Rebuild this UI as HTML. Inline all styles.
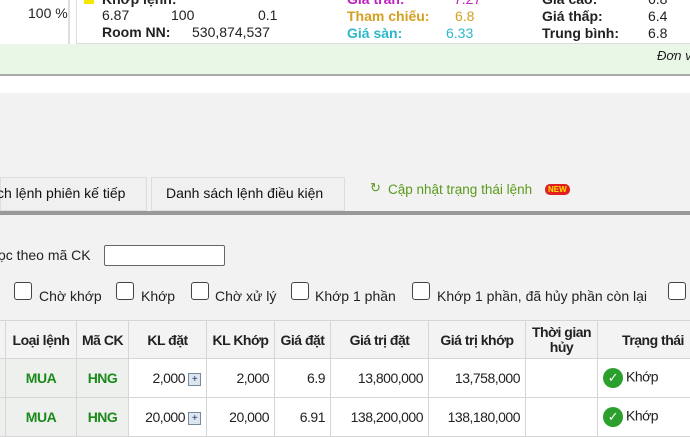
<!DOCTYPE html><html><head><meta charset="utf-8"><style>
body{margin:0;width:690px;height:435px;overflow:hidden;background:#f2f2f2;font-family:"Liberation Sans",sans-serif;position:relative;font-size:14px;color:#222}
.a{position:absolute;white-space:nowrap}
.b{font-weight:bold}
table{position:absolute;left:-2px;top:320px;border-collapse:collapse;background:#fff;table-layout:fixed;width:710px}
td,th{border:1px solid #d6d6d6;padding:0 5px;font-size:14px;white-space:nowrap;overflow:hidden;letter-spacing:-0.5px}
th{background:#f3f3f3;height:37px;font-weight:bold;color:#222}
td{height:38px;text-align:right}
.g{color:#1a8a1a;font-weight:bold;text-align:center}
.cb{position:absolute;top:282px;width:16px;height:16px;border:1.5px solid #444;border-radius:3px;background:#fff}
.ok{display:inline-block;width:20px;height:20px;border-radius:50%;background:#2ca02c;color:#fff;text-align:center;line-height:20px;font-size:13px;vertical-align:middle;margin-right:3px}
.plus{display:inline-block;width:11px;height:11px;border:1px solid #789;background:#dde6f0;font-size:10px;line-height:11px;text-align:center;color:#236;vertical-align:middle;margin-left:3px}
</style></head><body>
<div class="a" style="left:0;top:0;width:690px;height:44px;background:#fff"></div>
<div class="a" style="left:68px;top:0;width:2px;height:44px;background:#ddd"></div>
<div class="a" style="left:76px;top:0;width:1px;height:44px;background:#ddd"></div>
<div class="a" style="left:76px;top:43px;width:614px;height:1px;background:#ddd"></div>
<div class="a" style="left:28px;top:5px">100 %</div>
<div class="a" style="left:84px;top:-2px;width:10px;height:6px;background:#f5e700"></div>
<div class="a b" style="left:102px;top:-9px">Khớp lệnh:</div>
<div class="a" style="left:102px;top:7px">6.87</div>
<div class="a" style="left:171px;top:7px">100</div>
<div class="a" style="left:258px;top:7px">0.1</div>
<div class="a b" style="left:102px;top:24px">Room NN:</div>
<div class="a" style="left:192px;top:24px">530,874,537</div>
<div class="a b" style="left:347px;top:-9px;color:#c020c0">Giá trần:</div>
<div class="a" style="left:454px;top:-9px;color:#c020c0">7.27</div>
<div class="a b" style="left:347px;top:8px;color:#d4a020">Tham chiếu:</div>
<div class="a" style="left:455px;top:8px;color:#d4a020">6.8</div>
<div class="a b" style="left:347px;top:25px;color:#2cb8c8">Giá sàn:</div>
<div class="a" style="left:446px;top:25px;color:#2cb8c8">6.33</div>
<div class="a b" style="left:542px;top:-9px">Giá cao:</div>
<div class="a" style="left:648px;top:-9px">6.8</div>
<div class="a b" style="left:542px;top:8px">Giá thấp:</div>
<div class="a" style="left:648px;top:8px">6.4</div>
<div class="a b" style="left:542px;top:25px">Trung bình:</div>
<div class="a" style="left:648px;top:25px">6.8</div>
<div class="a" style="left:0;top:44px;width:690px;height:30px;background:#e9f8e6"></div>
<div class="a" style="left:657px;top:48px;font-style:italic;font-size:13px">Đơn v</div>
<div class="a" style="left:0;top:74px;width:690px;height:2px;background:#aaa"></div>
<div class="a" style="left:0;top:76px;width:690px;height:17px;background:#fff"></div>
<div class="a" style="left:0;top:177px;width:147px;height:34px;background:#f0f0f0;border:1px solid #ddd;box-sizing:border-box"></div>
<div class="a" style="left:-3px;top:185px;color:#111">ch lệnh phiên kế tiếp</div>
<div class="a" style="left:151px;top:177px;width:194px;height:34px;background:#f0f0f0;border:1px solid #ddd;box-sizing:border-box"></div>
<div class="a" style="left:166px;top:185px;color:#111">Danh sách lệnh điều kiện</div>
<div class="a" style="left:370px;top:180px;color:#5a9a1a;font-size:13px">↻</div>
<div class="a" style="left:388px;top:182px;color:#5a9a1a;font-size:13.5px">Cập nhật trạng thái lệnh</div>
<div class="a b" style="left:545px;top:184px;background:#e02020;color:#ffe000;font-size:8px;padding:1px 3px;border-radius:5px">NEW</div>
<div class="a" style="left:0;top:211px;width:690px;height:4px;background:#999"></div>
<div class="a" style="left:-2px;top:247px">ọc theo mã CK</div>
<div class="a" style="left:104px;top:245px;width:119px;height:19px;border:1.5px solid #666;border-radius:2px;background:#fff"></div>
<div class="cb" style="left:14px"></div><div class="a" style="left:39px;top:288px">Chờ khớp</div>
<div class="cb" style="left:116px"></div><div class="a" style="left:141px;top:288px">Khớp</div>
<div class="cb" style="left:191px"></div><div class="a" style="left:215px;top:288px">Chờ xử lý</div>
<div class="cb" style="left:291px"></div><div class="a" style="left:315px;top:288px">Khớp 1 phần</div>
<div class="cb" style="left:412px"></div><div class="a" style="left:437px;top:288px">Khớp 1 phần, đã hủy phần còn lại</div>
<div class="cb" style="left:668px"></div>
<table>
<colgroup><col style="width:7px"><col style="width:71px"><col style="width:52px"><col style="width:78px"><col style="width:68px"><col style="width:56px"><col style="width:98px"><col style="width:97px"><col style="width:72px"><col style="width:111px"></colgroup>
<tr><th style="padding:0"></th><th>Loại lệnh</th><th>Mã CK</th><th>KL đặt</th><th>KL Khớp</th><th>Giá đặt</th><th>Giá trị đặt</th><th>Giá trị khớp</th><th style="line-height:15px;white-space:normal">Thời gian hủy</th><th>Trạng thái</th></tr>
<tr><td style="background:#eef0ee;padding:0"></td><td class="g" style="background:#eef0ee">MUA</td><td class="g" style="background:#eef0ee">HNG</td><td>2,000<span class="plus">+</span></td><td>2,000</td><td>6.9</td><td>13,800,000</td><td>13,758,000</td><td></td><td style="text-align:left"><span class="ok">✓</span>Khớp</td></tr>
<tr><td style="background:#eef0ee;padding:0"></td><td class="g" style="background:#eef0ee">MUA</td><td class="g" style="background:#eef0ee">HNG</td><td>20,000<span class="plus">+</span></td><td>20,000</td><td>6.91</td><td>138,200,000</td><td>138,180,000</td><td></td><td style="text-align:left"><span class="ok">✓</span>Khớp</td></tr>
</table>
</body></html>
